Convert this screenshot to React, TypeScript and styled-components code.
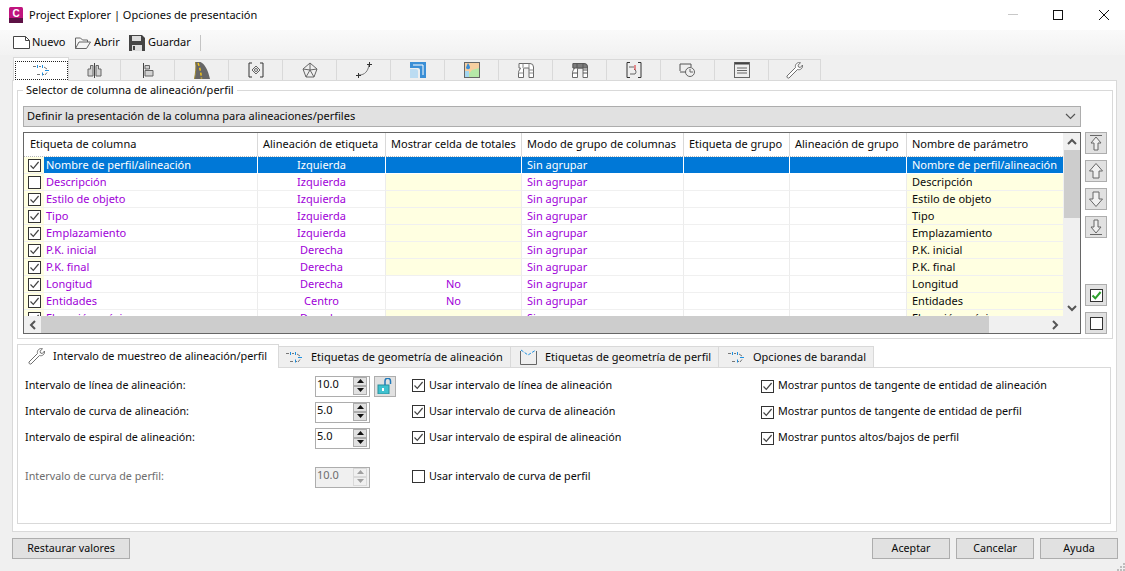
import React from "react";
import styled, { createGlobalStyle } from "styled-components";

const Global = createGlobalStyle`
  html, body { margin: 0; padding: 0; background: #f0f0f0; }
  body { width: 1125px; height: 571px; overflow: hidden; font-family: "Noto Sans", "Open Sans", sans-serif; font-size: 11px; color: #0a0a0a; }
  * { box-sizing: border-box; }
`;

const Win = styled.div`
  width: 1125px; height: 571px; display: flex; flex-direction: column; position: relative; background: #f0f0f0;
`;
const TitleBar = styled.div`
  height: 30px; background: #fff; display: flex; align-items: center; padding: 0 16px 0 9px; gap: 6px; flex: none;
`;
const TitleText = styled.span`flex: 1; padding-bottom: 2px;`;
const WinButtons = styled.div`display: flex; gap: 35px; align-items: center;`;
const WinButton = styled.div`
  width: 10px; height: 11px; display: flex; align-items: center; justify-content: center;
  &:last-child { margin-left: 1px; }
`;
const Toolbar = styled.div`
  height: 25px; display: flex; align-items: center; padding-left: 13px; flex: none; background: linear-gradient(#fafafa, #f2f2f2);
`;
const ToolItem = styled.div<{ $w: number; $gap: number }>`
  width: ${p => p.$w}px; display: flex; align-items: center; gap: ${p => p.$gap}px;
`;
const ToolText = styled.span`padding-bottom: 2px;`;
const ToolSep = styled.div`width: 1px; height: 16px; background: #c4c4c4;`;
const IconTabs = styled.div`
  display: flex; height: 22px; margin: 4px 0 0 13px; flex: none; position: relative; z-index: 1;
`;
const IconTab = styled.div<{ $active?: boolean }>`
  width: 54px; height: ${p => p.$active ? 24 : 22}px; margin-top: ${p => p.$active ? -2 : 0}px; flex: none;
  display: flex; align-items: center; justify-content: center;
  background: ${p => p.$active ? "#fff" : "#efefef"};
  border: 1px solid #d9d9d9; border-left: ${p => p.$active ? "1px solid #d9d9d9" : "none"};
  border-bottom: ${p => p.$active ? "none" : "1px solid #d9d9d9"};
  &:nth-child(1) { width: 56px; }
  &:nth-child(2) { width: 52px; }
  &:last-child { width: 52px; }
`;
const FocusBox = styled.div`
  width: 53px; height: 19px; margin-top: 1px; border: 1px dotted #222; display: flex; align-items: center; justify-content: center;
`;
const Panel = styled.div`
  margin: -1px 8px 0 12px; height: 452px; background: #fff; border: 1px solid #d9d9d9; padding: 8px 3px 0 4px; flex: none;
  display: flex; flex-direction: column;
`;
const Fieldset = styled.div`
  width: 1096px; height: 249px; margin-top: 1px; border: 1px solid #d9d9d9; position: relative; padding: 15px 0 0 5px; flex: none; display: flex;
`;
const Legend = styled.span`
  position: absolute; left: 5px; top: -8px; background: #fff; padding: 0 3px; line-height: 14px;
`;
const FieldMain = styled.div`width: 1058px; flex: none;`;
const Select = styled.div`
  height: 21px; width: 1058px; background: #e1e1e1; border: 1px solid #adadad; display: flex; align-items: center; padding: 0 4px 0 3px; justify-content: space-between;
`;
const SelectText = styled.span`padding-bottom: 3px;`;
const GridBox = styled.div`
  margin-top: 5px; width: 1058px; height: 202px; border: 1px solid #666; position: relative; overflow: hidden; background: #fff; display: flex;
`;
const GridMain = styled.div`width: 1039px; display: flex; flex-direction: column; flex: none;`;
const GridBody = styled.div`height: 167px; overflow: hidden; flex: none;`;
const Row = styled.div`display: flex; height: 17px;`;
const HeadRow = styled.div`display: flex; height: 24px; border-bottom: 1px dotted #b8b8b8; flex: none;`;
const Head = styled.div<{ $w: number }>`
  width: ${p => p.$w}px; flex: none; padding: 0 0 2px 6px; display: flex; align-items: center; border-right: 1px solid #d9d9d9; white-space: nowrap; overflow: hidden;
  & + & { padding-left: 5px; }
  &:last-child { border-right: none; }
`;
const Cell = styled.div<{ $w: number; $bg: string; $color: string; $center?: boolean; $sel?: boolean }>`
  width: ${p => p.$w}px; flex: none; height: 17px; background: ${p => p.$bg}; color: ${p => p.$color};
  border-right: 1px solid ${p => p.$sel ? "#fff" : "#ececec"}; border-bottom: 1px solid ${p => p.$sel ? "#fff" : "#f0f0f0"};
  display: flex; align-items: center; padding: 0 0 2px ${p => p.$center ? 0 : 5}px; white-space: nowrap; overflow: hidden;
  justify-content: ${p => p.$center ? "center" : "flex-start"};
  &:last-child { border-right: none; }
`;
const CheckCell = styled.div`
  width: 20px; flex: none; height: 17px; background: #ffffe1; border-bottom: 1px solid #f0f0f0; display: flex; align-items: center; padding-left: 4px;
`;
const LabelCell = styled(Cell)`padding-left: 2px;`;
const Box = styled.div<{ $size?: number }>`
  width: ${p => p.$size ?? 13}px; height: ${p => p.$size ?? 13}px; border: 1px solid #333; background: #fff; flex: none; display: flex; align-items: center; justify-content: center;
`;
const VScroll = styled.div`
  width: 17px; background: #f0f0f0; flex: none; display: flex; flex-direction: column; align-items: center;
`;
const ScrollBtn = styled.div`
  height: 17px; width: 17px; display: flex; align-items: center; justify-content: center; flex: none;
`;
const VThumb = styled.div`width: 16px; height: 68px; background: #cdcdcd; flex: none;`;
const VSpace = styled.div`flex: 1;`;
const HScroll = styled.div`
  position: absolute; left: 0; bottom: 0; height: 17px; width: 1056px; background: #f0f0f0; display: flex; z-index: 2;
`;
const HThumb = styled.div`width: 948px; height: 17px; background: #cdcdcd; flex: none;`;
const HSpace = styled.div`flex: 1;`;
const Corner = styled.div`width: 17px; height: 17px; flex: none;`;
const SideBtns = styled.div`
  width: 22px; margin-left: 4px; padding-top: 26px; display: flex; flex-direction: column; flex: none;
`;
const SideBtn = styled.div<{ $mt?: number }>`
  width: 22px; height: 22px; margin-top: ${p => p.$mt ?? 0}px; background: #e1e1e1; border: 1px solid #adadad; display: flex; align-items: center; justify-content: center; flex: none;
`;
const SubTabs = styled.div`display: flex; height: 24px; margin: 5px 0 0 0; position: relative; z-index: 1; flex: none;`;
const SubTab = styled.div<{ $w: number; $active?: boolean; $pl: number; $gap: number }>`
  width: ${p => p.$w}px; height: ${p => p.$active ? 24 : 22}px; margin-top: ${p => p.$active ? 0 : 2}px;
  background: ${p => p.$active ? "#fff" : "#efefef"}; border: 1px solid #d9d9d9;
  border-left: ${p => p.$active ? "1px solid #d9d9d9" : "none"}; border-bottom: ${p => p.$active ? "none" : "1px solid #d9d9d9"};
  display: flex; align-items: center; padding-left: ${p => p.$pl}px; gap: ${p => p.$gap}px; white-space: nowrap; flex: none;
  font-size: ${p => p.$active ? 10.85 : 11}px;
`;
const TabText = styled.span`padding-bottom: 2px;`;
const SubPanel = styled.div`
  height: 157px; width: 1094px; border: 1px solid #d9d9d9; margin-top: -1px; padding: 5px 0 0 7px; display: grid; font-size: 10.75px;
  grid-template-columns: 290px 97px 349px 1fr; grid-template-rows: 26px 26px 26px 13px 26px; align-items: center; flex: none;
`;
const FieldLabel = styled.div<{ $off?: boolean }>`color: ${p => p.$off ? "#6d6d6d" : "#0a0a0a"}; white-space: nowrap; padding-bottom: 2px;`;
const SpinWrap = styled.div`display: flex; align-items: center; gap: 4px;`;
const Spin = styled.div<{ $off?: boolean }>`
  width: 55px; height: 21px; border: 1px solid #adadad; background: ${p => p.$off ? "#f0f0f0" : "#fff"}; color: ${p => p.$off ? "#6d6d6d" : "#0a0a0a"};
  display: flex; align-items: center; padding: 0 0 5px 1px; position: relative; font-size: 11px;
`;
const Arrows = styled.div`
  position: absolute; right: 2px; top: 0; width: 14px; height: 18px; display: flex; flex-direction: column;
`;
const Arrow = styled.div<{ $off?: boolean }>`
  flex: 1; background: ${p => p.$off ? "#f0f0f0" : "#e1e1e1"}; border: 1px solid ${p => p.$off ? "#d9d9d9" : "#adadad"}; display: flex; align-items: center; justify-content: center;
`;
const LockBtn = styled.div`
  width: 22px; height: 21px; background: #e1e1e1; border: 1px solid #adadad; display: flex; align-items: center; justify-content: center;
`;
const CheckLine = styled.label<{ $low?: boolean }>`
  display: flex; align-items: center; gap: 4px; white-space: nowrap; padding-top: ${p => p.$low ? 1 : 0}px; margin-top: -1px;
`;
const CheckText = styled.span`padding-bottom: 2px;`;
const Footer = styled.div`
  display: flex; padding: 6px 7px 0 12px; align-items: flex-start; flex: none; font-size: 10.7px;
`;
const FootSpace = styled.div`flex: 1;`;
const FootBtn = styled.div<{ $w: number; $ml?: number }>`
  width: ${p => p.$w}px; height: 21px; margin-left: ${p => p.$ml ?? 0}px; background: #e1e1e1; border: 1px solid #adadad; display: flex; align-items: center; justify-content: center; padding-bottom: 2px;
`;
const Grip = styled.svg`position: absolute; right: 0; bottom: 0;`;

const Tick = ({ c = "#444", w = 1.2 }: { c?: string; w?: number }) => (
  <svg width="11" height="11" viewBox="0 0 11 11"><path d="M1.5 5.5 L4.3 8.3 L9.6 2" fill="none" stroke={c} strokeWidth={w} /></svg>
);
const Check = ({ on = true }: { on?: boolean }) => <Box>{on && <Tick />}</Box>;

const Caret = ({ d }: { d: "up" | "down" | "left" | "right" }) => {
  const p = { up: "M1 7 L5 3 L9 7", down: "M1 3 L5 7 L9 3", left: "M7 1 L3 5 L7 9", right: "M3 1 L7 5 L3 9" }[d];
  return <svg width="10" height="10" viewBox="0 0 10 10" style={{ display: "block" }}><path d={p} fill="none" stroke="#555" strokeWidth="2" /></svg>;
};
const Tri = ({ up, c = "#111" }: { up?: boolean; c?: string }) => (
  <svg width="7" height="4" viewBox="0 0 7 4" style={{ display: "block" }}><path d={up ? "M0 4 L3.5 0 L7 4 Z" : "M0 0 L3.5 4 L7 0 Z"} fill={c} /></svg>
);

const G = "#666";
const B = "#1e90e0";
const I = ({ children, w = 16, h = 16 }: { children: React.ReactNode; w?: number; h?: number }) => (
  <svg width={w} height={h} viewBox={`0 0 ${w} ${h}`} fill="none" stroke={G} strokeWidth="1" style={{ display: "block", flex: "none" }}>{children}</svg>
);
const AlignIcon = ({ c = B }: { c?: string }) => (
  <I w={16} h={12}>
    <path d="M0 2.500h3M6 2.500h2M11 3l3 2M14 8.500l-2 2.500M4 10.500h3M10 10.500h1" stroke="#777" />
    <path d="M4.500 1v3M9.500 1v3M9.500 8.500v3M12 6.500h4" stroke={c} />
  </I>
);
const Pipe = ({ dark }: { dark?: boolean }) => (
  <I w={16} h={15}>
    <path d="M1 .5H12Q15.500 .5 15.500 4V14.500H11V5H6.500Q5.500 5 5.500 6V14.500H.5V9.500Q.5 8 1.500 7L2.500 5H1Z" fill="#fff" stroke="#6a6a6a" />
    {dark && <path d="M1 .5H12Q15.500 .5 15.500 4V5H1Z" fill="#7c7c7c" stroke="#5a5a5a" />}
    <path d="M.5 10h5M11 10h4.500M5 .5V5M11 .5V5M11 7h4.500" stroke={dark ? "#555" : "#888"} />
  </I>
);
const Wrench = () => (
  <I w={17} h={17}>
    <path d="M1 14 L9.500 5.500 C8.800 3 10.500 .5 13.500 .5 L14.500 .8 L12 3.200 L12.500 5 L14.300 5.500 L16.500 3 C17 6 14.500 8.500 11.500 7.500 L3 16 C2 16.500 .5 15.500 1 14Z" fill="#fff" stroke="#707070" />
  </I>
);
const icons: React.ReactNode[] = [
  <AlignIcon />,
  <I w={15} h={15}><path d="M7.500 0v15" stroke="#444" /><path d="M6 2.500H3.500V6H1v7h5ZM9 2.500h2.500V6H14v7H9Z" fill="#d2d2d2" stroke="#666" /></I>,
  <I w={12} h={15}><path d="M1.500 0v15" stroke="#444" /><path d="M3 2.500h4.500V6H3ZM3 7.500h8V13H3Z" fill="#d2d2d2" stroke="#666" /></I>,
  <svg width="16" height="17" viewBox="0 0 16 17"><path d="M1.500 0h5c4.500 2 7.500 8 9.500 17H.5C1.500 11 2.500 5 1.500 0Z" fill="#666" /><path d="M4 1c2 5 3 10 3.500 15.500" fill="none" stroke="#f5c518" strokeWidth="1.500" strokeDasharray="3 2" /><path d="M1.500 0C2.500 5 1.500 11 .5 17" fill="none" stroke="#a08a30" /></svg>,
  <I w={16} h={16}><path d="M4 1H1v14h3M12 1h3v14h-3" stroke="#333" /><path d="M8 4l4 4-4 4-4-4Z" /><circle cx="8" cy="8" r="1.500" /></I>,
  <I><path d="M8 1l7 6-3 8H4L1 7Z M8 1v7 M1 7l7 1 7-1M8 8l-4 7M8 8l4 7" /></I>,
  <I><path d="M3 13c6 0 9-4 10-10" stroke="#777" /><path d="M0 13.500h5M2.500 11v5M11 2.500h5M13.500 0v5" stroke="#333" /></I>,
  <svg width="16" height="16" viewBox="0 0 16 16"><path d="M0 0h16v16h-6V8q0-2-2-2H0Z" fill="#3b8fd6" /><path d="M0 7h6q2 0 2 2v7H0Z" fill="#bcdcf2" /><path d="M3 3h10v10" stroke="#fff" strokeWidth="1" fill="none" /></svg>,
  <svg width="16" height="16" viewBox="0 0 16 16"><rect x=".5" y=".5" width="15" height="15" fill="#b6e8a8" stroke="#666" /><path d="M1 1h14v5L8 8 4 13H1Z" fill="#f7cfa0" /><path d="M4 1c2 3 2 4 2 5a2.200 2.200 0 0 1-4 0c0-1 1-3 2-5Z" fill="#3c8ed6" /><path d="M1 9h4v6H1Z" fill="#a5d7f0" /></svg>,
  <Pipe />,
  <Pipe dark />,
  <I><path d="M4 .5H1v15h3M12 .5h3v15h-3" stroke="#333" /><path d="M3 5h5M8 7a3 3 0 0 1 1 5H4" /><path d="M9 3v5" stroke="#d8262c" /></I>,
  <I w={17}><path d="M1 9V2h11v3M1 10h6" stroke="#555" /><circle cx="11" cy="10" r="4.500" /><path d="M11 7v3h3" /></I>,
  <I><rect x=".5" y=".5" width="15" height="15" /><path d="M1 1.500h14" stroke="#444" strokeWidth="2" /><path d="M3 6h10M3 8.500h10M3 11h10" /></I>,
  <Wrench />,
];

const COLS = [234, 128, 136, 162, 106, 117, 156];
const P = "#a000d8";
const Y = "#ffffe1";
const SEL = "#0078d7";
const rows: [string, boolean, string, boolean, string][] = [
  ["Nombre de perfil/alineación", true, "Izquierda", true, ""],
  ["Descripción", false, "Izquierda", true, ""],
  ["Estilo de objeto", true, "Izquierda", true, ""],
  ["Tipo", true, "Izquierda", true, ""],
  ["Emplazamiento", true, "Izquierda", true, ""],
  ["P.K. inicial", true, "Derecha", true, ""],
  ["P.K. final", true, "Derecha", true, ""],
  ["Longitud", true, "Derecha", false, "No"],
  ["Entidades", true, "Centro", false, "No"],
  ["Elevación máxima", true, "Derecha", true, ""],
];
const heads = ["Etiqueta de columna", "Alineación de etiqueta", "Mostrar celda de totales", "Modo de grupo de columnas", "Etiqueta de grupo", "Alineación de grupo", "Nombre de parámetro"];

const ArrowIcon = ({ down, bar }: { down?: boolean; bar?: boolean }) => (
  <svg width="16" height="18" viewBox="0 0 16 18" fill="none" stroke="#666" style={{ transform: down ? "scaleY(-1)" : undefined }}>
    {bar && <path d="M2 1.500h12" />}
    <path d={bar ? "M8 3 L3 9 H6 V16 H10 V9 H13 Z" : "M8 1.500 L1.500 9 H5 V16 H11 V9 H14.500 Z"} fill="#f0f0f0" />
  </svg>
);

const SpinField = ({ v, off }: { v: string; off?: boolean }) => (
  <Spin $off={off}>{v}<Arrows><Arrow $off={off}><Tri up c={off ? "#a0a0a0" : "#111"} /></Arrow><Arrow $off={off}><Tri c={off ? "#a0a0a0" : "#111"} /></Arrow></Arrows></Spin>
);

const App = () => (
  <Win>
    <Global />
    <TitleBar>
      <svg width="14" height="16" viewBox="0 0 14 16" style={{ flex: "none" }}>
        <rect width="14" height="16" rx="1.500" fill="#c0147e" />
        <rect y="11" width="14" height="5" fill="#5d1145" />
        <text x="7" y="9.500" textAnchor="middle" fontSize="10" fontWeight="700" fill="#fff" fontFamily="Liberation Sans">C</text>
      </svg>
      <TitleText>Project Explorer | Opciones de presentación</TitleText>
      <WinButtons>
        <WinButton><svg width="10" height="10"><path d="M0 4.500h10" stroke="#c8c8c8" /></svg></WinButton>
        <WinButton><svg width="10" height="10"><rect x=".5" y=".5" width="9" height="9" fill="none" stroke="#111" /></svg></WinButton>
        <WinButton><svg width="10" height="10"><path d="M0 0l10 10M10 0L0 10" stroke="#111" /></svg></WinButton>
      </WinButtons>
    </TitleBar>
    <Toolbar>
      <ToolItem $w={62} $gap={2}><svg width="17" height="13" style={{ flex: "none" }}><path d="M.5.500h12l4 4v8H.5Z" fill="#fff" stroke="#444" /><path d="M12.500.500v4h4" fill="none" stroke="#444" /></svg><ToolText>Nuevo</ToolText></ToolItem>
      <ToolItem $w={54} $gap={3}><svg width="16" height="12" style={{ flex: "none" }}><path d="M.5 11.500V1h5l2 2h5v2M.5 11.500h11l4-6.500H4Z" fill="none" stroke="#666" /></svg><ToolText>Abrir</ToolText></ToolItem>
      <ToolItem $w={71} $gap={3}><svg width="16" height="16" style={{ flex: "none" }}><path d="M0 0h13l3 3v13H0Z" fill="#444" /><rect x="3" y="1" width="9" height="5" fill="#ddd" /><rect x="3" y="10" width="10" height="6" fill="#ddd" /><rect x="4" y="11" width="2" height="4" fill="#444" /></svg><ToolText>Guardar</ToolText></ToolItem>
      <ToolSep />
    </Toolbar>
    <IconTabs>
      {icons.map((ic, i) => (
        <IconTab key={i} $active={i === 0}>{i === 0 ? <FocusBox>{ic}</FocusBox> : ic}</IconTab>
      ))}
    </IconTabs>
    <Panel>
      <Fieldset>
        <Legend>Selector de columna de alineación/perfil</Legend>
        <FieldMain>
          <Select>
            <SelectText>Definir la presentación de la columna para alineaciones/perfiles</SelectText>
            <svg width="11" height="7"><path d="M1 1l4.500 4.500L10 1" fill="none" stroke="#555" strokeWidth="1.200" /></svg>
          </Select>
          <GridBox>
            <GridMain>
              <HeadRow>{heads.map((h, i) => <Head key={h} $w={COLS[i]}>{h}</Head>)}</HeadRow>
              <GridBody>
                {rows.map((r, i) => {
                  const sel = i === 0;
                  const c = sel ? "#fff" : P;
                  const bg = sel ? SEL : "#fff";
                  return (
                    <Row key={r[0]}>
                      <CheckCell><Check on={r[1]} /></CheckCell>
                      <LabelCell $w={COLS[0] - 20} $bg={bg} $color={c} $sel={sel}>{r[0]}</LabelCell>
                      <Cell $w={COLS[1]} $bg={bg} $color={c} $sel={sel} $center>{r[2]}</Cell>
                      <Cell $w={COLS[2]} $bg={sel ? SEL : r[3] ? Y : "#fff"} $color={P} $sel={sel} $center>{r[4]}</Cell>
                      <Cell $w={COLS[3]} $bg={bg} $color={c} $sel={sel}>Sin agrupar</Cell>
                      <Cell $w={COLS[4]} $bg={bg} $color={c} $sel={sel} />
                      <Cell $w={COLS[5]} $bg={bg} $color={c} $sel={sel} />
                      <Cell $w={COLS[6]} $bg={sel ? SEL : Y} $color={sel ? "#fff" : "#0a0a0a"} $sel={sel}>{r[0]}</Cell>
                    </Row>
                  );
                })}
              </GridBody>
            </GridMain>
            <VScroll>
              <ScrollBtn><Caret d="up" /></ScrollBtn>
              <VThumb />
              <VSpace />
              <ScrollBtn><Caret d="down" /></ScrollBtn>
              <Corner />
            </VScroll>
            <HScroll>
              <ScrollBtn><Caret d="left" /></ScrollBtn>
              <HThumb />
              <HSpace />
              <ScrollBtn><Caret d="right" /></ScrollBtn>
              <Corner />
            </HScroll>
          </GridBox>
        </FieldMain>
        <SideBtns>
          <SideBtn><ArrowIcon bar /></SideBtn>
          <SideBtn $mt={6}><ArrowIcon /></SideBtn>
          <SideBtn $mt={6}><ArrowIcon down /></SideBtn>
          <SideBtn $mt={6}><ArrowIcon down bar /></SideBtn>
          <SideBtn $mt={46}><Box $size={13}><Tick c="#2ca02c" w={2} /></Box></SideBtn>
          <SideBtn $mt={6}><Box $size={13} /></SideBtn>
        </SideBtns>
      </Fieldset>
      <SubTabs>
        <SubTab $w={262} $active $pl={10} $gap={8}><Wrench /><TabText>Intervalo de muestreo de alineación/perfil</TabText></SubTab>
        <SubTab $w={232} $pl={7} $gap={9}><AlignIcon /><TabText>Etiquetas de geometría de alineación</TabText></SubTab>
        <SubTab $w={208} $pl={9} $gap={8}><svg width="17" height="16" style={{ flex: "none" }} fill="none"><path d="M.5 2v13.500h16V2" stroke="#666" /><path d="M1 1l7 5 8-5" stroke={B} strokeDasharray="3 1.500" /></svg><TabText>Etiquetas de geometría de perfil</TabText></SubTab>
        <SubTab $w={155} $pl={9} $gap={9}><AlignIcon /><TabText>Opciones de barandal</TabText></SubTab>
      </SubTabs>
      <SubPanel>
        <FieldLabel>Intervalo de línea de alineación:</FieldLabel>
        <SpinWrap><SpinField v="10.0" /><LockBtn><svg width="16" height="16"><rect x="1" y="7" width="11" height="9" fill="#3fc1cf" stroke="#2a8f9c" /><path d="M8 7V3a2.500 2.500 0 0 1 5.500 0V6" fill="none" stroke="#1f78b8" strokeWidth="1.500" /><rect x="5" y="10" width="2" height="3" fill="#fff" /></svg></LockBtn></SpinWrap>
        <CheckLine><Check /><CheckText>Usar intervalo de línea de alineación</CheckText></CheckLine>
        <CheckLine $low><Check /><CheckText>Mostrar puntos de tangente de entidad de alineación</CheckText></CheckLine>
        <FieldLabel>Intervalo de curva de alineación:</FieldLabel>
        <SpinWrap><SpinField v="5.0" /></SpinWrap>
        <CheckLine><Check /><CheckText>Usar intervalo de curva de alineación</CheckText></CheckLine>
        <CheckLine $low><Check /><CheckText>Mostrar puntos de tangente de entidad de perfil</CheckText></CheckLine>
        <FieldLabel>Intervalo de espiral de alineación:</FieldLabel>
        <SpinWrap><SpinField v="5.0" /></SpinWrap>
        <CheckLine><Check /><CheckText>Usar intervalo de espiral de alineación</CheckText></CheckLine>
        <CheckLine $low><Check /><CheckText>Mostrar puntos altos/bajos de perfil</CheckText></CheckLine>
        <span /><span /><span /><span />
        <FieldLabel $off>Intervalo de curva de perfil:</FieldLabel>
        <SpinWrap><SpinField v="10.0" off /></SpinWrap>
        <CheckLine><Check on={false} /><CheckText>Usar intervalo de curva de perfil</CheckText></CheckLine>
        <span />
      </SubPanel>
    </Panel>
    <Footer>
      <FootBtn $w={118}>Restaurar valores</FootBtn>
      <FootSpace />
      <FootBtn $w={78}>Aceptar</FootBtn>
      <FootBtn $w={78} $ml={6}>Cancelar</FootBtn>
      <FootBtn $w={78} $ml={6}>Ayuda</FootBtn>
    </Footer>
    <Grip width="8" height="8" viewBox="0 0 8 8" fill="#bdbdbd">
      <rect x="6" y="0" width="2" height="2" /><rect x="3" y="3" width="2" height="2" /><rect x="6" y="3" width="2" height="2" />
      <rect x="0" y="6" width="2" height="2" /><rect x="3" y="6" width="2" height="2" /><rect x="6" y="6" width="2" height="2" />
    </Grip>
  </Win>
);

export default App;
